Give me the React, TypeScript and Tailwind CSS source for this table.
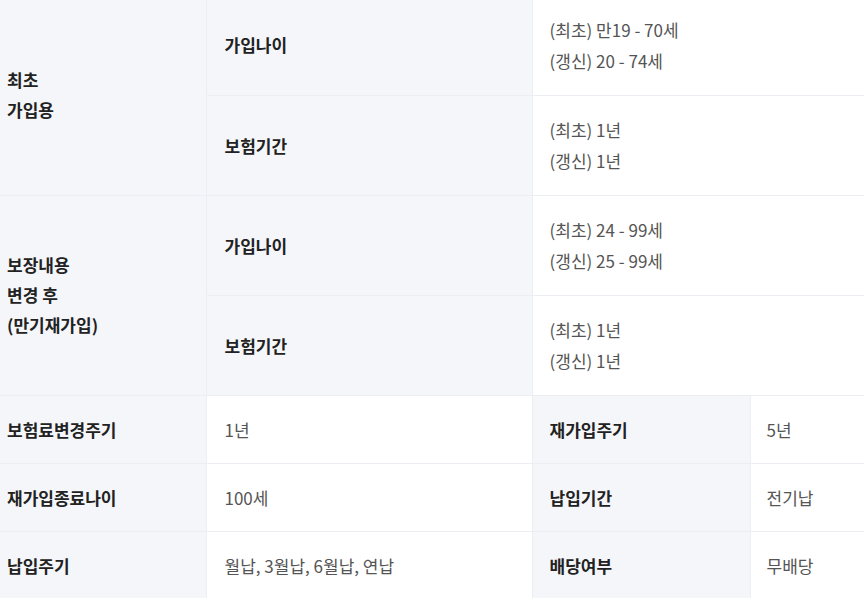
import React from 'react';

const th = 'bg-[#f5f6fa] text-[#222] font-bold text-left align-middle border-b border-r border-[#eceef3]';
const td = 'bg-white text-[#555] font-normal text-left align-middle border-b border-r border-[#eceef3]';

function Lines({ items }: { items: string[] }) {
  return (
    <>
      {items.map((t) => (
        <div key={t}>{t}</div>
      ))}
    </>
  );
}

export default function App() {
  const bottom = [
    ['보험료변경주기', '1년', '재가입주기', '5년'],
    ['재가입종료나이', '100세', '납입기간', '전기납'],
    ['납입주기', '월납, 3월납, 6월납, 연납', '배당여부', '무배당'],
  ];

  return (
    <div
      className="w-[864px] h-[598px] overflow-hidden bg-white"
      style={{ fontFamily: '"Noto Sans CJK KR", "Noto Sans", sans-serif' }}
    >
      <table className="-mt-[5px] w-[864px] table-fixed border-collapse text-[17px] leading-[31px]">
        <colgroup>
          <col className="w-[206px]" />
          <col className="w-[326px]" />
          <col className="w-[218px]" />
          <col className="w-[114px]" />
        </colgroup>
        <tbody>
          <tr className="h-[100px]">
            <th rowSpan={2} className={`${th} pl-[7px] leading-[30px]`}>
              <Lines items={['최초', '가입용']} />
            </th>
            <th className={`${th} pl-[18px]`}>가입나이</th>
            <td colSpan={2} className={`${td} pl-[17px]`}>
              <Lines items={['(최초) 만19 - 70세', '(갱신) 20 - 74세']} />
            </td>
          </tr>
          <tr className="h-[100px]">
            <th className={`${th} pl-[18px]`}>보험기간</th>
            <td colSpan={2} className={`${td} pl-[17px]`}>
              <Lines items={['(최초) 1년', '(갱신) 1년']} />
            </td>
          </tr>
          <tr className="h-[100px]">
            <th rowSpan={2} className={`${th} pl-[7px] leading-[30px]`}>
              <Lines items={['보장내용', '변경 후', '(만기재가입)']} />
            </th>
            <th className={`${th} pl-[18px]`}>가입나이</th>
            <td colSpan={2} className={`${td} pl-[17px]`}>
              <Lines items={['(최초) 24 - 99세', '(갱신) 25 - 99세']} />
            </td>
          </tr>
          <tr className="h-[100px]">
            <th className={`${th} pl-[18px]`}>보험기간</th>
            <td colSpan={2} className={`${td} pl-[17px]`}>
              <Lines items={['(최초) 1년', '(갱신) 1년']} />
            </td>
          </tr>
          {bottom.map(([a, b, c, d]) => (
            <tr key={a} className="h-[68px]">
              <th className={`${th} pl-[7px]`}>{a}</th>
              <td className={`${td} pl-[18px]`}>{b}</td>
              <th className={`${th} pl-[17px]`}>{c}</th>
              <td className={`${td} pl-[16px]`}>{d}</td>
            </tr>
          ))}
        </tbody>
      </table>
    </div>
  );
}
